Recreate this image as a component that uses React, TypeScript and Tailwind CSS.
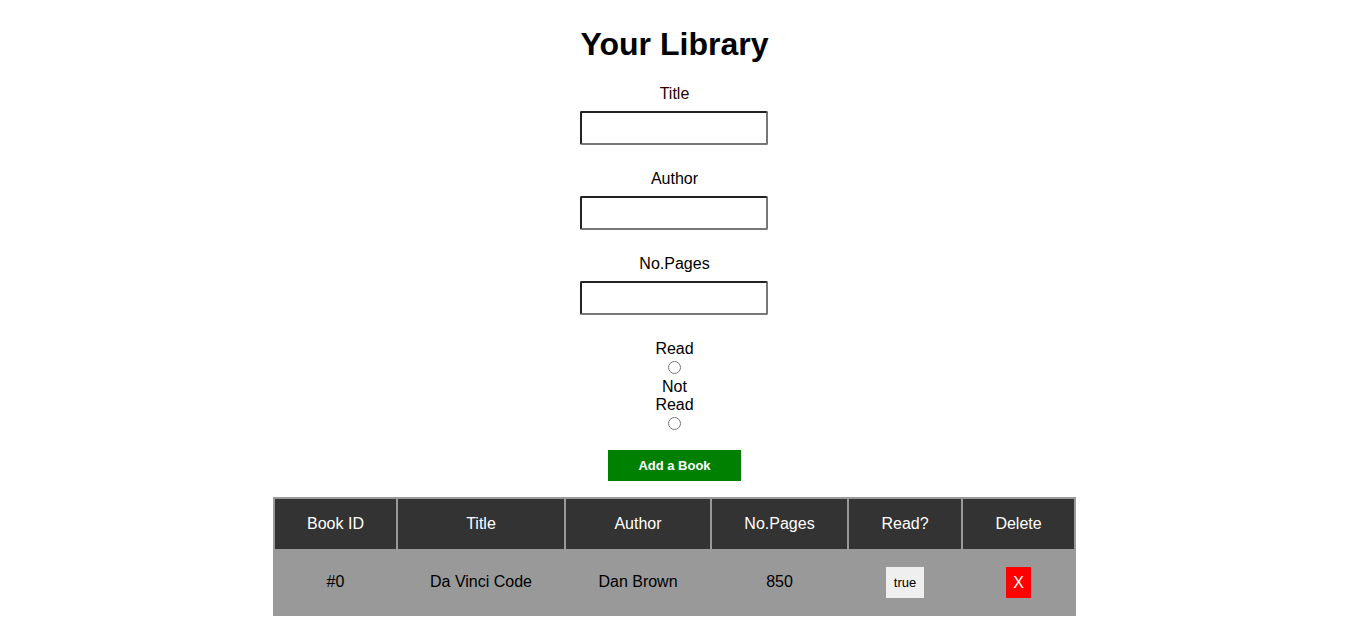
import React from "react";

const font = { fontFamily: '"Liberation Sans", Arial, sans-serif' };

function Field({ label, labelClass = "text-black" }: { label: string; labelClass?: string }) {
  return (
    <div className="flex flex-col items-center">
      <label className={`text-[16px] leading-[18px] ${labelClass}`}>{label}</label>
      <input
        type="text"
        className="mt-[8px] mr-[2px] w-[188px] h-[34px] bg-white border-2 border-t-[#222] border-l-[#222] border-b-[#777] border-r-[#777] rounded-[2px] outline-none"
      />
    </div>
  );
}

function Radio() {
  return (
    <span className="inline-block w-[13px] h-[13px] rounded-full border border-[#767676] bg-white" />
  );
}

export default function App() {
  const cols = [
    { name: "Book ID", w: "w-[121px]" },
    { name: "Title", w: "w-[166px]" },
    { name: "Author", w: "w-[144px]" },
    { name: "No.Pages", w: "w-[135px]" },
    { name: "Read?", w: "w-[112px]" },
    { name: "Delete", w: "w-[111px]" },
  ];
  return (
    <div className="min-h-[623px] bg-white flex flex-col items-center text-black pl-[4px]" style={font}>
      <h1 className="text-[32px] leading-[37px] font-bold mt-[26px]">Your Library</h1>
      <div className="flex flex-col items-center mt-[22px] gap-[25px]">
        <Field label="Title" labelClass="text-[#2a0000]" />
        <Field label="Author" />
        <Field label="No.Pages" />
      </div>
      <div className="mt-[25px] w-[50px] flex flex-col items-center text-center text-[16px] leading-[18px]">
        <span>Read</span>
        <span className="mt-[3px] mb-[4px] h-[13px] flex"><Radio /></span>
        <span>Not Read</span>
        <span className="mt-[3px] mb-[4px] h-[13px] flex"><Radio /></span>
      </div>
      <button className="mt-[16px] w-[133px] h-[31px] bg-[#008000] text-white text-[13px] font-bold">
        Add a Book
      </button>
      <div className="mt-[16px] bg-[#999] p-[2px] flex flex-col gap-[2px]">
        <div className="flex gap-[2px]">
          {cols.map((c) => (
            <div
              key={c.name}
              className={`${c.w} h-[50px] bg-[#333] text-white text-[16px] flex items-center justify-center`}
            >
              {c.name}
            </div>
          ))}
        </div>
        <div className="flex gap-[2px] h-[63px] text-[16px] pb-[2px]">
          <div className="w-[121px] flex items-center justify-center">#0</div>
          <div className="w-[166px] flex items-center justify-center">Da Vinci Code</div>
          <div className="w-[144px] flex items-center justify-center">Dan Brown</div>
          <div className="w-[135px] flex items-center justify-center">850</div>
          <div className="w-[112px] flex items-center justify-center">
            <span className="mt-[2px] w-[38px] h-[31px] bg-[#efefef] text-[13px] flex items-center justify-center">true</span>
          </div>
          <div className="w-[111px] flex items-center justify-center">
            <span className="mt-[2px] w-[25px] h-[31px] bg-[#ff0000] text-white text-[16px] flex items-center justify-center">X</span>
          </div>
        </div>
      </div>
    </div>
  );
}
